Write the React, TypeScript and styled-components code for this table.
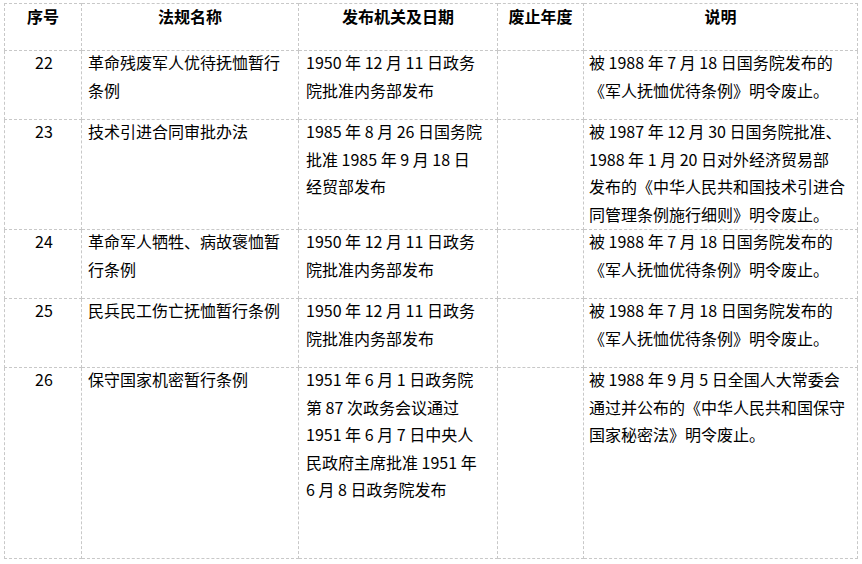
import React from "react";
import styled, { createGlobalStyle } from "styled-components";

const Global = createGlobalStyle`
  html, body { margin: 0; padding: 0; background: #fff; }
  body { font-family: "Noto Sans CJK SC", "Noto Sans", sans-serif; color: #000; }
`;

const Wrap = styled.div`
  padding: 3px 0 0 4px;
`;

const Table = styled.table`
  border-collapse: collapse;
  table-layout: fixed;
  width: 854px;
  font-size: 16px;
  line-height: 27.5px;
`;

const Row = styled.tr<{ $h: number }>`
  height: ${(p) => p.$h}px;
`;

const HeadCell = styled.th`
  border: 1px dashed #c8c8c8;
  padding: 0 6px;
  font-weight: bold;
  text-align: center;
  vertical-align: top;
  white-space: nowrap;
`;

const HeadText = styled.div`
  margin-top: -1px;
`;

const Cell = styled.td<{ $center?: boolean; $pl?: number }>`
  border: 1px dashed #c8c8c8;
  padding: 0 4px 0 ${(p) => p.$pl ?? 6}px;
  text-align: ${(p) => (p.$center ? "center" : "left")};
  vertical-align: top;
  white-space: nowrap;
`;

const Content = styled.div`
  margin-top: -2px;
`;

const Line = styled.div``;

type Rec = { no: string; name: string[]; org: string[]; year: string; note: string[]; h: number };

const noteA = ["被 1988 年 7 月 18 日国务院发布的", "《军人抚恤优待条例》明令废止。"];

const rows: Rec[] = [
  { no: "22", name: ["革命残废军人优待抚恤暂行", "条例"], org: ["1950 年 12 月 11 日政务", "院批准内务部发布"], year: "", note: noteA, h: 69 },
  {
    no: "23",
    name: ["技术引进合同审批办法"],
    org: ["1985 年 8 月 26 日国务院", "批准 1985 年 9 月 18 日", "经贸部发布"],
    year: "",
    note: ["被 1987 年 12 月 30 日国务院批准、", "1988 年 1 月 20 日对外经济贸易部", "发布的《中华人民共和国技术引进合", "同管理条例施行细则》明令废止。"],
    h: 110,
  },
  { no: "24", name: ["革命军人牺牲、病故褒恤暂", "行条例"], org: ["1950 年 12 月 11 日政务", "院批准内务部发布"], year: "", note: noteA, h: 69 },
  { no: "25", name: ["民兵民工伤亡抚恤暂行条例"], org: ["1950 年 12 月 11 日政务", "院批准内务部发布"], year: "", note: noteA, h: 69 },
  {
    no: "26",
    name: ["保守国家机密暂行条例"],
    org: ["1951 年 6 月 1 日政务院", "第 87 次政务会议通过", "1951 年 6 月 7 日中央人", "民政府主席批准 1951 年", "6 月 8 日政务院发布"],
    year: "",
    note: ["被 1988 年 9 月 5 日全国人大常委会", "通过并公布的《中华人民共和国保守", "国家秘密法》明令废止。"],
    h: 191,
  },
];

const Lines = ({ items }: { items: string[] }) => (
  <Content>
    {items.map((t, i) => (
      <Line key={i}>{t}</Line>
    ))}
  </Content>
);

export default function App() {
  return (
    <Wrap>
      <Global />
      <Table>
        <colgroup>
          <col style={{ width: 77 }} />
          <col style={{ width: 217 }} />
          <col style={{ width: 199 }} />
          <col style={{ width: 86 }} />
          <col style={{ width: 274 }} />
        </colgroup>
        <thead>
          <Row $h={47}>
            <HeadCell><HeadText>序号</HeadText></HeadCell>
            <HeadCell><HeadText>法规名称</HeadText></HeadCell>
            <HeadCell><HeadText>发布机关及日期</HeadText></HeadCell>
            <HeadCell><HeadText>废止年度</HeadText></HeadCell>
            <HeadCell><HeadText>说明</HeadText></HeadCell>
          </Row>
        </thead>
        <tbody>
          {rows.map((r) => (
            <Row key={r.no} $h={r.h}>
              <Cell $center>
                <Lines items={[r.no]} />
              </Cell>
              <Cell $pl={6}>
                <Lines items={r.name} />
              </Cell>
              <Cell $pl={7}>
                <Lines items={r.org} />
              </Cell>
              <Cell>{r.year}</Cell>
              <Cell $pl={5}>
                <Lines items={r.note} />
              </Cell>
            </Row>
          ))}
        </tbody>
      </Table>
    </Wrap>
  );
}
